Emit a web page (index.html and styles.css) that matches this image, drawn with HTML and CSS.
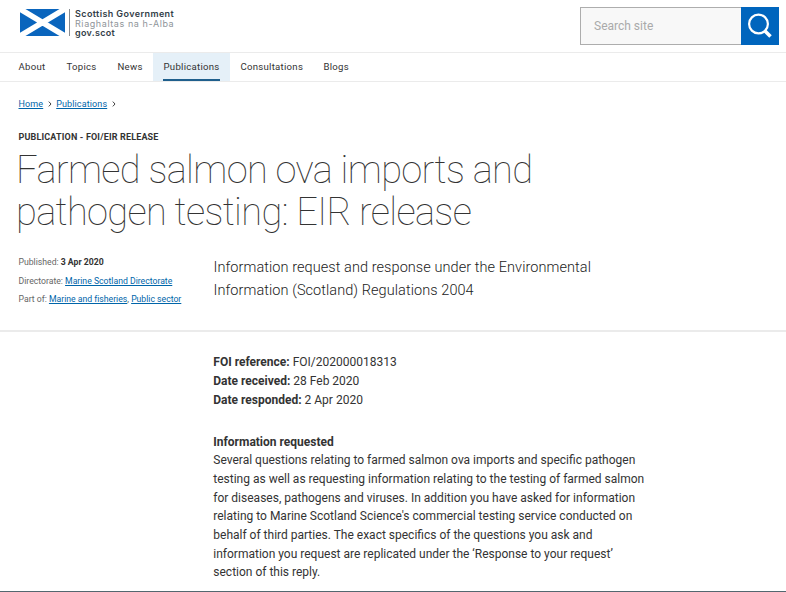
FILE: index.html
```html
<!DOCTYPE html>
<html lang="en">
<head>
<meta charset="utf-8">
<title>Farmed salmon ova imports and pathogen testing: EIR release</title>
<link rel="stylesheet" href="styles.css">
</head>
<body>
<header class="masthead">
  <a class="brand" href="#">
    <svg class="flag" viewBox="0 0 45 27" aria-hidden="true"><rect width="45" height="27" fill="#0a65bd"/><path d="M0 0L45 27M45 0L0 27" stroke="#fff" stroke-width="5.6"/></svg>
    <span class="brand-text"><span class="brand-en">Scottish Government</span><span class="brand-gd">Riaghaltas na h-Alba</span><span class="brand-url">gov.scot</span></span>
  </a>
  <form class="search">
    <input class="search-input" type="text" placeholder="Search site" aria-label="Search site">
    <button class="search-button" type="button" aria-label="Search"><svg viewBox="0 0 38 38"><circle cx="17.5" cy="17" r="9.4" fill="none" stroke="#fff" stroke-width="2.2"/><path d="M23.5 23.5L29.5 29.5" stroke="#fff" stroke-width="3.6"/></svg></button>
  </form>
</header>
<nav class="nav">
  <a class="about" href="#">About</a><a class="topics" href="#">Topics</a><a class="news" href="#">News</a><a class="current" href="#"><span>Publications</span></a><a class="consultations" href="#">Consultations</a><a class="blogs" href="#">Blogs</a>
</nav>
<div class="crumbs"><a href="#">Home</a><svg viewBox="0 0 4 6"><path d="M.8.6L3 3L.8 5.4"/></svg><a href="#">Publications</a><svg viewBox="0 0 4 6"><path d="M.8.6L3 3L.8 5.4"/></svg></div>
<main>
  <section class="intro">
    <p class="label">PUBLICATION - FOI/EIR RELEASE</p>
    <h1>Farmed salmon ova imports and<br>pathogen testing: EIR release</h1>
    <div class="columns">
      <div class="meta">
        <p>Published: <b>3 Apr 2020</b></p>
        <p>Directorate: <a href="#">Marine Scotland Directorate</a></p>
        <p>Part of: <a href="#">Marine and fisheries</a>, <a href="#">Public sector</a></p>
      </div>
      <p class="summary">Information request and response under the Environmental<br>Information (Scotland) Regulations 2004</p>
    </div>
  </section>
  <article class="content">
    <p class="reference"><b>FOI reference:</b> FOI/202000018313<br><b>Date received:</b> 28 Feb 2020<br><b>Date responded:</b> 2 Apr 2020</p>
    <p class="body"><b>Information requested</b><br>Several questions relating to farmed salmon ova imports and specific pathogen<br>testing as well as requesting information relating to the testing of farmed salmon<br>for diseases, pathogens and viruses. In addition you have asked for information<br>relating to Marine Scotland Science's commercial testing service conducted on<br>behalf of third parties. The exact specifics of the questions you ask and<br>information you request are replicated under the ‘Response to your request’<br>section of this reply.</p>
  </article>
</main>
</body>
</html>
```
FILE: styles.css
```css
* { box-sizing: border-box; }
html, body { height: 592px; overflow: hidden; }
body { margin: 0; background: #fff; color: #333; font-family: Roboto, sans-serif; font-size: 12px; display: flex; flex-direction: column; border-bottom: 1px solid #53676f; }
p, h1 { margin: 0; white-space: nowrap; }
a { color: #0065a9; }
.masthead { height: 52px; flex: none; display: flex; justify-content: space-between; align-items: flex-start; padding: 7px 7px 0 20px; }
.brand { display: flex; text-decoration: none; color: #333e48; padding-top: 2px; }
.flag { width: 45px; height: 27px; }
.brand-text { margin-left: 4px; padding-left: 5px; height: 27px; border-left: 1px solid #858b91; display: flex; flex-direction: column; font: 600 9px/9.5px Inter, sans-serif; white-space: nowrap; }
.brand-text span { display: block; height: 9.5px; }
.brand-en { letter-spacing: .4px; }
.brand-gd { color: #8f959a; font-weight: 400; letter-spacing: .58px; }
.brand-url { letter-spacing: .3px; }
.search { display: flex; width: 199px; height: 38px; }
.search-input { width: 161px; height: 38px; border: 1px solid #adadad; border-right: 0; border-radius: 0; background: #f8f8f8; padding: 0 13px; font: 12px Roboto, sans-serif; }
.search-input::placeholder { color: #aaa; opacity: 1; }
.search-button { width: 38px; height: 38px; border: 0; padding: 0; background: #0065bd; }
.search-button svg { display: block; width: 38px; height: 38px; }
.nav { height: 30px; flex: none; border-top: 1px solid #ebebeb; border-bottom: 1px solid #ebebeb; display: flex; font-size: 9.6px; line-height: 28px; padding-left: 18px; }
.nav a { color: #333; text-decoration: none; letter-spacing: .27px; white-space: nowrap; text-indent: .5px; }
.about { width: 48px; }
.topics { width: 51px; }
.news { width: 36px; }
.nav .current { width: 77px; background: #e5f0f8; padding: 0 10px; }
.current span { display: block; height: 28px; border-bottom: 2px solid #1f5f8c; }
.consultations { width: 83px; margin-left: 10px; }
.crumbs { height: 48px; flex: none; padding: 16px 0 0 18.5px; display: flex; font-size: 9px; line-height: 12px; letter-spacing: .12px; }
.crumbs svg { width: 4px; height: 6px; margin: 3px 4px 0 5px; fill: none; stroke: #444; stroke-width: 1; }
.intro { height: 202px; border-bottom: 2px solid #ebebeb; padding-left: 18.5px; }
.label { font-size: 9px; line-height: 14px; font-weight: 700; letter-spacing: .16px; }
.intro h1 { margin: 5px 0 0 -2.5px; font-size: 38px; line-height: 42px; font-weight: 100; letter-spacing: -.65px; }
.columns { display: flex; margin-top: 20px; }
.meta { width: 195px; font-size: 8.7px; line-height: 18.5px; letter-spacing: -.015px; color: #666; }
.meta b { color: #333; }
.summary { font-size: 14.5px; line-height: 23px; font-weight: 300; margin-top: 3px; letter-spacing: .07px; color: #222; }
.content { padding: 21px 0 0 213.3px; }
.reference { line-height: 19px; }
.body { line-height: 18.65px; margin-top: 22.7px; }
```
